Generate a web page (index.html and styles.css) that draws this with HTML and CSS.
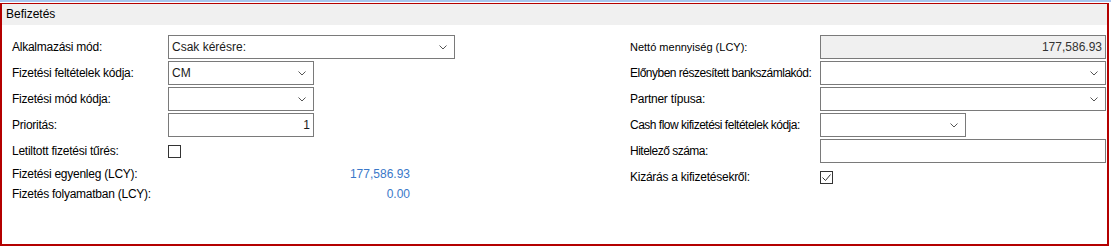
FILE: index.html
```html
<!DOCTYPE html>
<html>
<head>
	<title>Befizetés</title>
	<link rel="stylesheet" href="styles.css">
</head>
<body>
	<div class="topline"></div>
	<section class="panel">
		<div class="panel-head">Befizetés</div>
		<div class="panel-body">
			<div class="col col-left">
				<div class="row">
					<label>Alkalmazási mód:</label>
					<div class="field wide">
						<span>Csak kérésre:</span>
						<svg class="chev" width="8" height="5" viewBox="0 0 8 5"><path d="M0.5 0.5 L4 4 L7.5 0.5" fill="none" stroke="#555" stroke-width="1"/></svg>
					</div>
				</div>
				<div class="row">
					<label>Fizetési feltételek kódja:</label>
					<div class="field narrow">
						<span>CM</span>
						<svg class="chev" width="8" height="5" viewBox="0 0 8 5"><path d="M0.5 0.5 L4 4 L7.5 0.5" fill="none" stroke="#555" stroke-width="1"/></svg>
					</div>
				</div>
				<div class="row">
					<label>Fizetési mód kódja:</label>
					<div class="field narrow">
						<span></span>
						<svg class="chev" width="8" height="5" viewBox="0 0 8 5"><path d="M0.5 0.5 L4 4 L7.5 0.5" fill="none" stroke="#555" stroke-width="1"/></svg>
					</div>
				</div>
				<div class="row">
					<label>Prioritás:</label>
					<div class="field narrow num">
						<span>1</span>
					</div>
				</div>
				<div class="row">
					<label>Letiltott fizetési tűrés:</label>
					<span class="check"></span>
				</div>
				<div class="row value">
					<label>Fizetési egyenleg (LCY):</label>
					<span class="amount">177,586.93</span>
				</div>
				<div class="row value">
					<label>Fizetés folyamatban (LCY):</label>
					<span class="amount">0.00</span>
				</div>
			</div>

			<div class="col col-right">
				<div class="row">
					<label class="small">Nettó mennyiség (LCY):</label>
					<div class="field fill num disabled">
						<span>177,586.93</span>
					</div>
				</div>
				<div class="row">
					<label class="tight">Előnyben részesített bankszámlakód:</label>
					<div class="field fill">
						<span></span>
						<svg class="chev" width="8" height="5" viewBox="0 0 8 5"><path d="M0.5 0.5 L4 4 L7.5 0.5" fill="none" stroke="#555" stroke-width="1"/></svg>
					</div>
				</div>
				<div class="row">
					<label>Partner típusa:</label>
					<div class="field fill">
						<span></span>
						<svg class="chev" width="8" height="5" viewBox="0 0 8 5"><path d="M0.5 0.5 L4 4 L7.5 0.5" fill="none" stroke="#555" stroke-width="1"/></svg>
					</div>
				</div>
				<div class="row">
					<label class="tight">Cash flow kifizetési feltételek kódja:</label>
					<div class="field narrow">
						<span></span>
						<svg class="chev" width="8" height="5" viewBox="0 0 8 5"><path d="M0.5 0.5 L4 4 L7.5 0.5" fill="none" stroke="#555" stroke-width="1"/></svg>
					</div>
				</div>
				<div class="row">
					<label class="tight">Hitelező száma:</label>
					<div class="field fill">
						<span></span>
					</div>
				</div>
				<div class="row">
					<label>Kizárás a kifizetésekről:</label>
					<span class="check">
						<svg width="11" height="11" viewBox="0 0 11 11"><path d="M1.5 5.5 L4.5 8.5 L9.5 2.5" fill="none" stroke="#333" stroke-width="1"/></svg>
					</span>
				</div>
			</div>
		</div>
	</section>
</body>
</html>
```

FILE: styles.css
```css
body {
	margin: 0;
	background-color: #fff;
	font-family: "Liberation Sans", Arial, sans-serif;
	font-size: 12px;
	color: #000;
}

.topline {
	height: 2px;
	background-color: #a9c6ee;
	margin-bottom: 1px;
}

.panel {
	width: 1109px;
	height: 243px;
	box-sizing: border-box;
	border: 2px solid #b40000;
	border-top-width: 1px;
}

.panel-head {
	height: 21px;
	line-height: 21px;
	background-color: #f0f0f0;
	padding-left: 4px;
	font-size: 12px;
}

.panel-body {
	display: flex;
	padding-top: 10px;
}

.col {
	display: flex;
	flex-direction: column;
	gap: 2px;
}

.col-left {
	width: 628px;
	padding-left: 10px;
	box-sizing: border-box;
}

.col-right {
	flex: 1;
	padding-right: 1px;
}

.row {
	display: flex;
	align-items: center;
	height: 24px;
}

.row.value {
	height: 18px;
}

label {
	flex: none;
	width: 156px;
	letter-spacing: -0.25px;
}

.col-right label {
	width: 190px;
}

label.small {
	font-size: 11px;
	letter-spacing: 0;
}

label.tight {
	letter-spacing: -0.5px;
}

.field {
	display: flex;
	align-items: center;
	height: 24px;
	box-sizing: border-box;
	border: 1px solid #7a7a7a;
	padding: 0 3px;
	background-color: #fff;
	color: #1a1a1a;
}

.field.wide {
	width: 287px;
}

.field.narrow {
	width: 146px;
}

.field.fill {
	flex: 1;
}

.field.num {
	justify-content: flex-end;
}

.field.disabled {
	background-color: #f0f0f0;
	color: #333;
}

.chev {
	margin-left: auto;
	margin-right: 4px;
}

.check {
	display: flex;
	align-items: center;
	justify-content: center;
	width: 13px;
	height: 13px;
	box-sizing: border-box;
	border: 1px solid #333;
	background-color: #fff;
}

.amount {
	width: 242px;
	text-align: right;
	color: #3a78c9;
}
```
